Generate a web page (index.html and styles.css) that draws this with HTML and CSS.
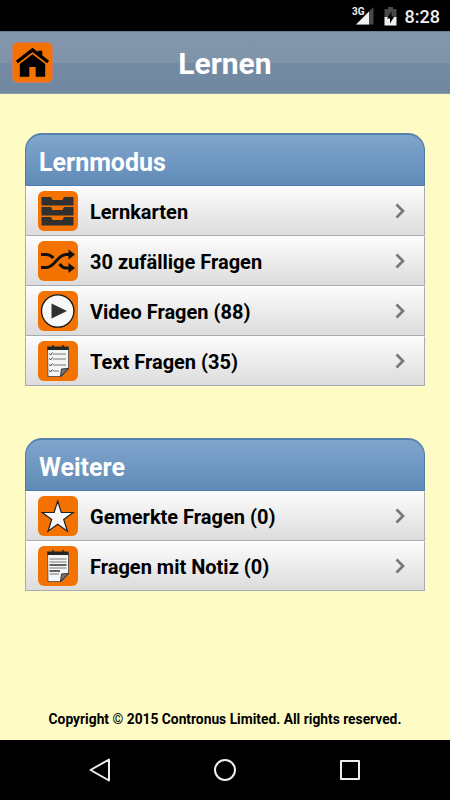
FILE: index.html
```html
<!DOCTYPE html>
<html lang="de">
<head>
    <meta charset="UTF-8">
    <meta name="viewport" content="width=device-width, initial-scale=1.0">
    <link rel="stylesheet" href="styles.css">
    <title>Lernen</title>
</head>
<body>
    <div class="statusbar">
        <span class="network">3G</span>
        <svg class="signal" width="18" height="18" viewBox="0 0 18 18">
            <path d="M17.5 0V17.5H0Z" fill="#484848"/>
            <path d="M13 4.5V17.5H0Z" fill="#f0f0f0"/>
        </svg>
        <svg class="battery" width="13" height="19" viewBox="0 0 13 19">
            <path d="M4 0H9V2H12.5V10H.5V2H4Z" fill="#484848"/>
            <path d="M.5 10H12.5V18.5H.5Z" fill="#f0f0f0"/>
            <path d="M7.5 4.5L3 11.5H6V16.5L10.3 9.5H7.5Z" fill="#000"/>
        </svg>
        <span class="time">8:28</span>
    </div>

    <header class="header">
        <a class="home" href="#">
            <svg class="icon" viewBox="0 0 40 40">
                <path d="M25.5 8H30V15L25.5 11Z"/>
                <path d="M4 19.5L20 7L36 19.5" fill="none" stroke="#000" stroke-width="3.4"/>
                <path d="M20 11.5L33 21.5V34.5H23.3V24.5H16.7V34.5H7V21.5Z"/>
            </svg>
        </a>
        <h1>Lernen</h1>
    </header>

    <main class="content">
        <section class="panel">
            <h2>Lernmodus</h2>
            <ul>
                <li>
                    <svg class="icon" viewBox="0 0 40 40">
                        <g fill="#303030">
                            <path d="M3.5 6H13L14.5 9H24.5L26 6H35.5V14.5H3.5Z"/>
                            <path d="M3.5 16H13L14.5 19H24.5L26 16H35.5V24.5H3.5Z"/>
                            <path d="M3.5 26H13L14.5 29H24.5L26 26H35.5V34.5H3.5Z"/>
                        </g>
                    </svg>
                    <span>Lernkarten</span>
                    <svg class="arrow" viewBox="0 0 10 16"><path d="M1.5 1.5L8 8L1.5 14.5"/></svg>
                </li>
                <li>
                    <svg class="icon" viewBox="0 0 40 40">
                        <path d="M3 26.5H8.5C17 26.5 19 13.5 28 13.5H32" fill="none" stroke="#111" stroke-width="3"/>
                        <path d="M3 13.5H8.5C11.5 13.5 13.5 15 15.3 17M21.5 23C23.5 25.5 25.5 27 28 27H32" fill="none" stroke="#111" stroke-width="3"/>
                        <path d="M30.5 8.5L37 13.5L30.5 18.5ZM30.5 22L37 27L30.5 32Z" fill="#111"/>
                    </svg>
                    <span>30 zufällige Fragen</span>
                    <svg class="arrow" viewBox="0 0 10 16"><path d="M1.5 1.5L8 8L1.5 14.5"/></svg>
                </li>
                <li>
                    <svg class="icon" viewBox="0 0 40 40">
                        <circle cx="19.700" cy="20" r="16.2" fill="#f8f8f8" stroke="#151515" stroke-width="1.3"/>
                        <path d="M13.500 12.5L29 20L13.500 27.5Z" fill="#303030"/>
                    </svg>
                    <span>Video Fragen (88)</span>
                    <svg class="arrow" viewBox="0 0 10 16"><path d="M1.5 1.5L8 8L1.5 14.5"/></svg>
                </li>
                <li>
                    <svg class="icon" viewBox="0 0 40 40">
                        <path d="M9.5 7H30.5V28L23.5 35.500H10Z" fill="#f5f5f5" stroke="#333" stroke-width=".7"/>
                        <path d="M9.3 5.5H30.5V9H9.3Z" fill="#252525"/>
                        <path d="M15 4V8M25 4V8" stroke="#252525" stroke-width="1.5"/>
                        <path d="M15 13H28M15 18H28M15 24H28M15 30H21" stroke="#777" stroke-width="1"/>
                        <path d="M11.5 12.5L12.500 14L14.5 11.5M11.5 17.500L12.5 19L14.5 16.500M11.5 23.500L12.5 25L14.500 22.500M11.5 29.5L12.5 31L14.5 28.5" fill="none" stroke="#333" stroke-width="1"/>
                        <path d="M30.5 27.5L22.500 35.5L23.5 28Z" fill="#777" stroke="#303030"/>
                    </svg>
                    <span>Text Fragen (35)</span>
                    <svg class="arrow" viewBox="0 0 10 16"><path d="M1.5 1.5L8 8L1.5 14.5"/></svg>
                </li>
            </ul>
        </section>

        <section class="panel">
            <h2>Weitere</h2>
            <ul>
                <li>
                    <svg class="icon" viewBox="0 0 40 40">
                        <path d="M19.700 5L23.3 16.5H35.2L25.7 23.5L29.4 35.3L19.700 28.2L10 35.3L13.7 23.5L4.200 16.5H16.100Z" fill="#f8f8f8" stroke="#222" stroke-width="1.2"/>
                    </svg>
                    <span>Gemerkte Fragen (0)</span>
                    <svg class="arrow" viewBox="0 0 10 16"><path d="M1.5 1.5L8 8L1.5 14.5"/></svg>
                </li>
                <li>
                    <svg class="icon" viewBox="0 0 40 40">
                        <path d="M9.5 7H30.5V28L23.5 35.5H10Z" fill="#f5f5f5" stroke="#333" stroke-width=".7"/>
                        <path d="M9.3 5.5H30.5V9H9.3Z" fill="#252525"/>
                        <path d="M15 4V8M25 4V8" stroke="#252525" stroke-width="1.5"/>
                        <path d="M11.5 13H28.5M11.5 16H28.5M11.5 22H28.5M11.5 28H21" stroke="#777" stroke-width="1"/>
                        <path d="M11.5 19H28.5M11.5 25H22" stroke="#333" stroke-width="1.3"/>
                        <path d="M30.5 27.5L22.5 35.5L23.5 28Z" fill="#777" stroke="#303030"/>
                    </svg>
                    <span>Fragen mit Notiz (0)</span>
                    <svg class="arrow" viewBox="0 0 10 16"><path d="M1.5 1.5L8 8L1.5 14.5"/></svg>
                </li>
            </ul>
        </section>

        <footer>Copyright © 2015 Contronus Limited. All rights reserved.</footer>
    </main>

    <nav class="navbar">
        <svg viewBox="0 0 24 24"><path d="M21 1.5V22.5L2.5 12Z"/></svg>
        <svg viewBox="0 0 24 24"><circle cx="12" cy="12" r="10"/></svg>
        <svg viewBox="0 0 24 24"><rect x="3" y="3" width="18" height="18"/></svg>
    </nav>
</body>
</html>
```

FILE: styles.css
```css
* {
    box-sizing: border-box;
}

body {
    font-family: Roboto, "Liberation Sans", sans-serif;
    font-weight: bold;
    background-color: #fefcc4;
    margin: 0;
    height: 800px;
    display: flex;
    flex-direction: column;
    overflow: hidden;
}

svg {
    display: block;
    flex: none;
}

/* Status bar */
.statusbar {
    height: 31px;
    background-color: #000;
    color: #f0f0f0;
    display: flex;
    justify-content: flex-end;
    align-items: center;
    padding: 1px 10px 0 0;
}

.network {
    font-size: 10px;
    line-height: 10px;
    margin-bottom: 9px;
    margin-right: -9px;
}

.battery {
    margin: 0 8px 0 10px;
}

.time {
    font-size: 18px;
    font-weight: 500;
    padding-top: 1px;
}

/* Header */
.header {
    height: 63px;
    flex: none;
    display: grid;
    grid-template-columns: 40px 1fr 40px;
    align-items: center;
    padding: 0 12px;
    border-top: 1px solid #6f7f92;
    border-bottom: 1px solid #8b9caf;
    background: linear-gradient(#8396ab 0, #8094a9 50%, #748aa3 50%, #7188a1 100%);
}

.header h1 {
    margin: 0;
    padding-top: 3px;
    color: #fff;
    font-size: 30px;
    line-height: 36px;
    text-align: center;
}

.icon {
    width: 40px;
    height: 40px;
    background-color: #f37200;
    border-radius: 6px;
}

.home .icon {
    width: 41px;
    height: 41px;
    border: 1px solid #c77c66;
}

/* Lists */
.content {
    flex: 1;
    display: flex;
    flex-direction: column;
    padding: 39px 25px 0;
}

.panel {
    margin-bottom: 52px;
}

.panel h2 {
    margin: 0;
    height: 53px;
    padding: 4px 13px 0;
    border: 1px solid #4b7cab;
    border-top: 2px solid #5582ad;
    border-radius: 17px 17px 0 0;
    background: linear-gradient(#80a5cd, #608bb6);
    color: #fff;
    font-size: 25px;
    line-height: 47px;
}

.panel ul {
    list-style: none;
    margin: 0;
    padding: 0;
}

.panel li {
    height: 50px;
    display: flex;
    align-items: center;
    padding: 0 19px 0 11.5px;
    border: 1px solid #aaaab2;
    border-top: 1px solid #fff;
    background: linear-gradient(#fcfcfc, #dcdcdc);
    color: #000;
    font-size: 20px;
}

.panel li span {
    flex: 1;
    padding: 2px 0 0 12.5px;
}

.arrow {
    width: 10px;
    height: 16px;
    fill: none;
    stroke: #777;
    stroke-width: 2.7;
}

footer {
    margin-top: auto;
    margin-bottom: 13px;
    font-size: 13.8px;
    line-height: 16px;
    text-align: center;
    white-space: nowrap;
}

/* Navigation bar */
.navbar {
    height: 60px;
    flex: none;
    display: flex;
    justify-content: center;
    align-items: center;
    gap: 101px;
    background-color: #000;
}

.navbar svg {
    width: 24px;
    height: 24px;
    fill: none;
    stroke: #eee;
    stroke-width: 2;
    stroke-linejoin: round;
}
```
